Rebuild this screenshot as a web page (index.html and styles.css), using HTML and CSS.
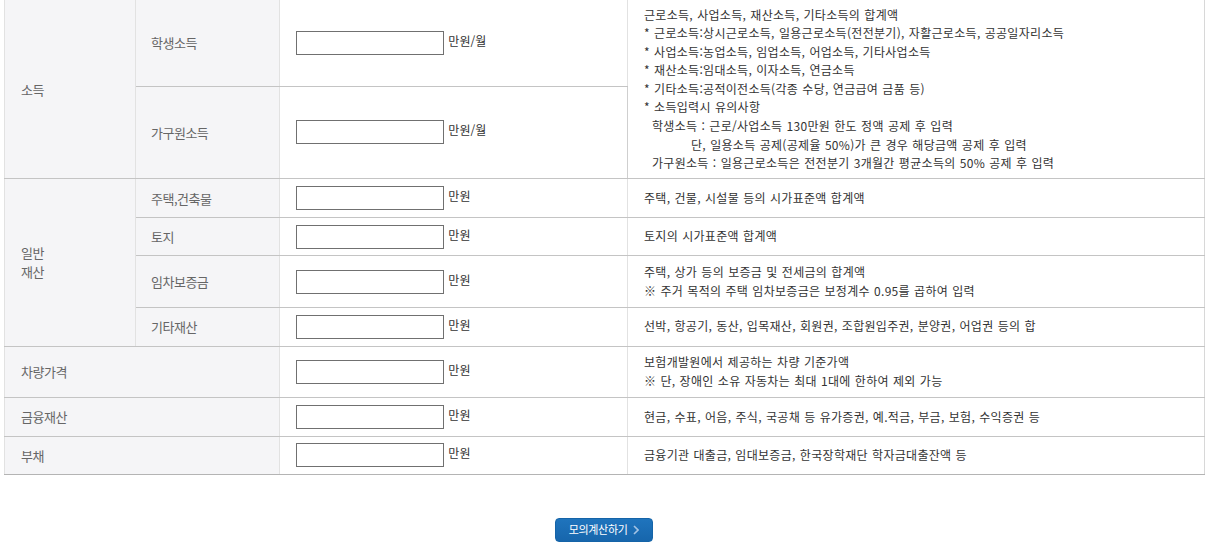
FILE: index.html
```html
<!DOCTYPE html>
<html lang="ko">
<head>
    <meta charset="UTF-8">
    <meta name="viewport" content="width=device-width, initial-scale=1.0">
    <title>모의계산</title>
    <link rel="stylesheet" href="styles.css">
</head>
<body>
    <div class="wrap">
        <table class="calc">
            <colgroup>
                <col class="c1">
                <col class="c2">
                <col class="c3">
                <col class="c4">
            </colgroup>
            <tr class="row-a">
                <th rowspan="2">소득</th>
                <th class="sub">학생소득</th>
                <td class="inp"><input type="text"> 만원/월</td>
                <td class="desc desc-long" rowspan="2">
                    <p>근로소득, 사업소득, 재산소득, 기타소득의 합계액</p>
                    <p>* 근로소득:상시근로소득, 일용근로소득(전전분기), 자활근로소득, 공공일자리소득</p>
                    <p>* 사업소득:농업소득, 임업소득, 어업소득, 기타사업소득</p>
                    <p>* 재산소득:임대소득, 이자소득, 연금소득</p>
                    <p>* 기타소득:공적이전소득(각종 수당, 연금급여 금품 등)</p>
                    <p>* 소득입력시 유의사항</p>
                    <p class="ind1">학생소득 : 근로/사업소득 130만원 한도 정액 공제 후 입력</p>
                    <p class="ind2">단, 일용소득 공제(공제율 50%)가 큰 경우 해당금액 공제 후 입력</p>
                    <p class="ind1">가구원소득 : 일용근로소득은 전전분기 3개월간 평균소득의 50% 공제 후 입력</p>
                </td>
            </tr>
            <tr class="row-b">
                <th class="sub">가구원소득</th>
                <td class="inp"><input type="text"> 만원/월</td>
            </tr>
            <tr>
                <th rowspan="4">일반<br>재산</th>
                <th class="sub">주택,건축물</th>
                <td class="inp"><input type="text"> 만원</td>
                <td class="desc">주택, 건물, 시설물 등의 시가표준액 합계액</td>
            </tr>
            <tr>
                <th class="sub">토지</th>
                <td class="inp"><input type="text"> 만원</td>
                <td class="desc">토지의 시가표준액 합계액</td>
            </tr>
            <tr>
                <th class="sub">임차보증금</th>
                <td class="inp"><input type="text"> 만원</td>
                <td class="desc">주택, 상가 등의 보증금 및 전세금의 합계액<br>※ 주거 목적의 주택 임차보증금은 보정계수 0.95를 곱하여 입력</td>
            </tr>
            <tr>
                <th class="sub">기타재산</th>
                <td class="inp"><input type="text"> 만원</td>
                <td class="desc">선박, 항공기, 동산, 입목재산, 회원권, 조합원입주권, 분양권, 어업권 등의 합</td>
            </tr>
            <tr>
                <th colspan="2">차량가격</th>
                <td class="inp"><input type="text"> 만원</td>
                <td class="desc">보험개발원에서 제공하는 차량 기준가액<br>※ 단, 장애인 소유 자동차는 최대 1대에 한하여 제외 가능</td>
            </tr>
            <tr>
                <th colspan="2">금융재산</th>
                <td class="inp"><input type="text"> 만원</td>
                <td class="desc">현금, 수표, 어음, 주식, 국공채 등 유가증권, 예.적금, 부금, 보험, 수익증권 등</td>
            </tr>
            <tr class="last">
                <th colspan="2">부채</th>
                <td class="inp"><input type="text"> 만원</td>
                <td class="desc">금융기관 대출금, 임대보증금, 한국장학재단 학자금대출잔액 등</td>
            </tr>
        </table>

        <div class="btn-area">
            <button class="btn-calc">모의계산하기 <svg class="arr" width="6" height="10" viewBox="0 0 6 10"><polyline points="1,1 5,5 1,9" fill="none" stroke="#a4c3e4" stroke-width="1.6"/></svg></button>
        </div>
    </div>
</body>
</html>
```

FILE: styles.css
```css
body {
    margin: 0;
    font-family: "Noto Sans CJK KR", "Noto Sans", sans-serif;
    color: #333;
    background: #fff;
}
.wrap {
    width: 1200px;
    margin-left: 4px;
}
.calc {
    width: 1200px;
    border-collapse: collapse;
    table-layout: fixed;
}
.calc col.c1 { width: 131px; }
.calc col.c2 { width: 144px; }
.calc col.c3 { width: 348px; }
.calc col.c4 { width: 577px; }

.calc th, .calc td {
    border-top: 1px solid #c4c4c4;
    border-bottom: 1px solid #c4c4c4;
    border-left: 1px solid #e2e2e2;
    border-right: 1px solid #e2e2e2;
    padding: 6.75px 16px;
    vertical-align: middle;
}
.calc tr:first-child th, .calc tr:first-child td {
    border-top: none;
}
.calc th {
    background-color: #f5f5f7;
    color: #666;
    font-size: 13px;
    font-weight: normal;
    text-align: left;
    letter-spacing: -0.5px;
    line-height: 19px;
}
.calc th.sub {
    padding-left: 15px;
}
.calc td.desc {
    border-left-color: #cfcfcf;
    border-right-color: #d8d8d8;
    font-size: 12px;
    line-height: 18.6px;
    color: #333;
    letter-spacing: 0.3px;
    word-spacing: 0.5px;
}
.calc td.desc-long {
    padding-top: 5.5px;
    padding-bottom: 5.5px;
}
.calc td.desc p {
    margin: 0;
}
.calc td.desc .ind1 {
    padding-left: 8px;
}
.calc td.desc .ind2 {
    padding-left: 47px;
}
.calc tr.row-a td.inp, .calc tr.row-a th.sub {
    height: 72px;
}
.calc tr.last th, .calc tr.last td {
    border-bottom-color: #b4b4b4;
}
.calc td.inp {
    font-size: 12px;
    color: #333;
    white-space: nowrap;
}
.calc td.inp input {
    width: 148px;
    height: 24px;
    box-sizing: border-box;
    border: 1px solid #707070;
    margin: 0 1px 0 0;
    padding: 0 4px;
    vertical-align: middle;
    font-size: 12px;
}

.btn-area {
    margin-top: 40px;
    text-align: center;
}
.btn-calc {
    height: 24px;
    width: 98px;
    padding: 0 0 1px 0;
    border: 1px solid #1564a8;
    border-radius: 4px;
    background: linear-gradient(#1f74bd, #1766ac);
    color: #fff;
    font-family: "Noto Sans CJK KR", sans-serif;
    font-size: 11px;
    letter-spacing: -0.3px;
    cursor: pointer;
}
.btn-calc .arr {
    margin-left: 3px;
    vertical-align: -1px;
}
```
